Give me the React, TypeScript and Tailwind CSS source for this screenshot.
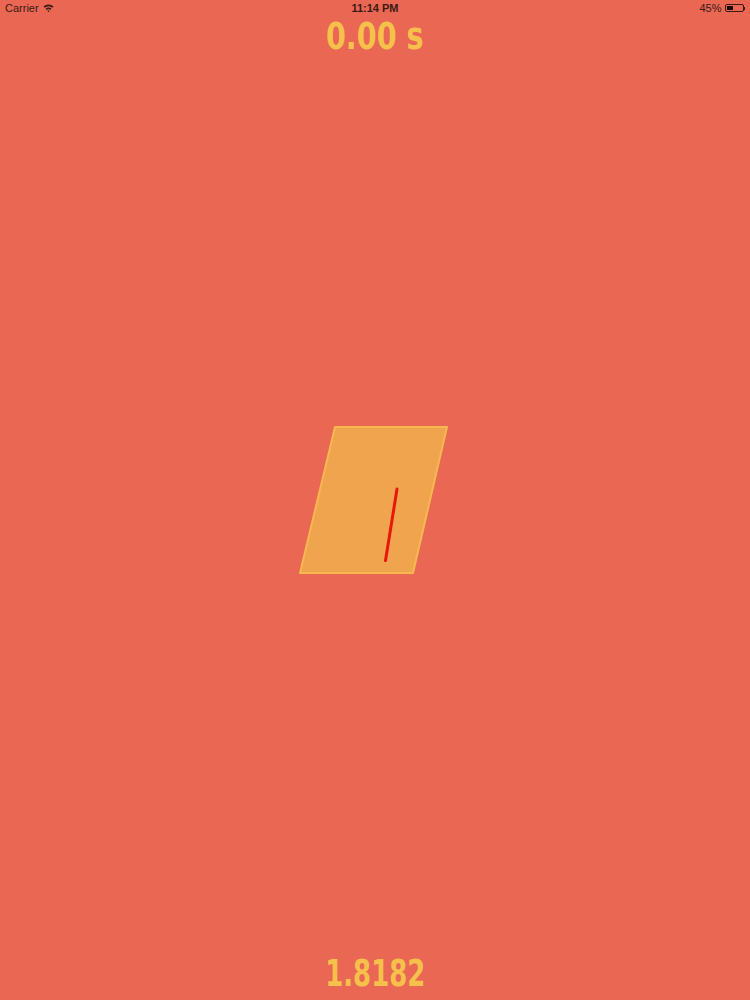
export default function App() {
  return (
    <div className="flex h-[1000px] w-[750px] flex-col bg-[#e96753] font-['Liberation_Sans',sans-serif]">
      {/* status bar */}
      <div className="flex h-[16px] items-center justify-between px-[5px] text-[11px] leading-none text-[#3a1a14]">
        <div className="flex w-[120px] items-center gap-[4px]">
          <span>Carrier</span>
          <svg width="11" height="8" viewBox="0 0 11 8">
            <path d="M0.5 2.6 A7 7 0 0 1 10.5 2.6 L9.3 3.8 A5.3 5.3 0 0 0 1.7 3.8 Z" fill="#3a1a14" />
            <path d="M2.6 4.7 A4 4 0 0 1 8.4 4.7 L7.2 5.9 A2.3 2.3 0 0 0 3.8 5.9 Z" fill="#3a1a14" />
            <path d="M5.5 8 L4.4 6.9 A1.5 1.5 0 0 1 6.6 6.9 Z" fill="#3a1a14" />
          </svg>
        </div>
        <span className="font-semibold">11:14 PM</span>
        <div className="flex w-[120px] items-center justify-end gap-[3px]">
          <span>45%</span>
          <div className="flex items-center">
            <div className="flex h-[8px] w-[19px] items-center rounded-[2px] border border-[#3a1a14] p-[1px]">
              <div className="h-full w-[45%] bg-[#1a0a08]" />
            </div>
            <div className="h-[3px] w-[1.5px] bg-[#3a1a14]" />
          </div>
        </div>
      </div>

      <div className="mt-[1px] flex justify-center">
        <span className="inline-block scale-x-[0.86] font-['DejaVu_Sans_Condensed','DejaVu_Sans',sans-serif] text-[37px] font-bold leading-[40px] text-[#f6c14b]">
          0.00 s
        </span>
      </div>

      <div className="flex flex-1 items-center justify-center">
        <svg width="152" height="150" viewBox="0 0 152 150" className="mt-[-10px]">
          <polygon
            points="36,1 148,1 114,147 1,147"
            fill="#f0a44e"
            stroke="#f6b850"
            strokeWidth="2"
            strokeLinejoin="round"
          />
          <line x1="98" y1="63" x2="86.5" y2="134.5" stroke="#e8170b" strokeWidth="3" strokeLinecap="round" />
        </svg>
      </div>

      <div className="mb-[6px] flex justify-center">
        <span className="inline-block scale-x-[0.78] font-['DejaVu_Sans_Condensed','DejaVu_Sans',sans-serif] text-[37px] font-bold leading-[40px] text-[#f6c14b]">
          1.8182
        </span>
      </div>
    </div>
  );
}
